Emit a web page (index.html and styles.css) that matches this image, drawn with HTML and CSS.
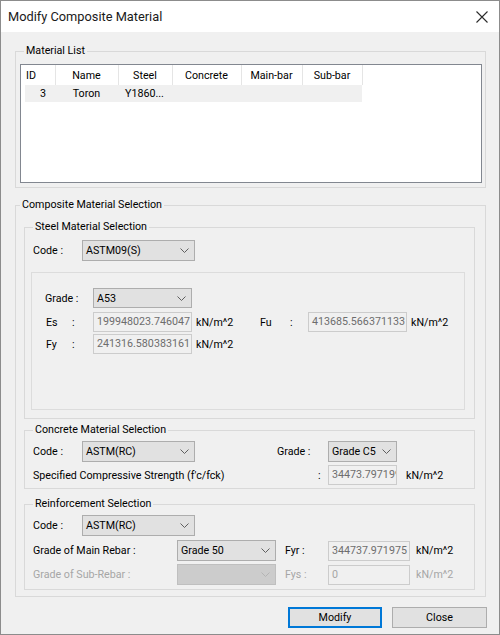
FILE: index.html
```html
<!DOCTYPE html>
<html lang="en">
<head>
    <meta charset="UTF-8">
    <meta name="viewport" content="width=device-width, initial-scale=1.0">
    <title>Modify Composite Material</title>
    <link rel="stylesheet" href="styles.css">
</head>
<body>
    <div class="dialog">
        <div class="titlebar">
            <span class="title">Modify Composite Material</span>
            <svg class="close" width="12" height="12" viewBox="0 0 12 12">
                <path d="M0.5 0.5L11.5 11.5M11.5 0.5L0.5 11.5" stroke="#2b2b2b" stroke-width="1.1" fill="none"/>
            </svg>
        </div>

        <div class="content">
            <fieldset class="group list-group">
                <legend>Material List</legend>
                <div class="listview">
                    <table>
                        <colgroup>
                            <col style="width:34px"><col style="width:63px"><col style="width:54px">
                            <col style="width:69px"><col style="width:61px"><col style="width:60px">
                        </colgroup>
                        <thead>
                            <tr>
                                <th class="c-id">ID</th>
                                <th>Name</th>
                                <th>Steel</th>
                                <th>Concrete</th>
                                <th>Main-bar</th>
                                <th>Sub-bar</th>
                            </tr>
                        </thead>
                        <tbody>
                            <tr>
                                <td class="c-id">3</td>
                                <td class="mid">Toron</td>
                                <td class="steel-cell">Y1860...</td>
                                <td></td>
                                <td></td>
                                <td></td>
                            </tr>
                        </tbody>
                    </table>
                </div>
            </fieldset>

            <fieldset class="group composite">
                <legend>Composite Material Selection</legend>

                <!-- steel -->
                <fieldset class="group sub steel">
                    <legend>Steel Material Selection</legend>
                    <div class="row code-row">
                        <span class="lbl code-lbl">Code :</span>
                        <div class="combo w113">ASTM09(S)
                            <svg width="9" height="5" viewBox="0 0 9 5"><path d="M0.5 0.5L4.5 4.5L8.5 0.5" fill="none" stroke="#5f5f5f"/></svg>
                        </div>
                    </div>
                    <div class="inner">
                        <div class="row">
                            <span class="lbl grade-lbl">Grade :</span>
                            <div class="combo w99 h20">A53
                                <svg width="9" height="5" viewBox="0 0 9 5"><path d="M0.5 0.5L4.5 4.5L8.5 0.5" fill="none" stroke="#5f5f5f"/></svg>
                            </div>
                        </div>
                        <div class="row prop-row first">
                            <span class="lbl pname">Es</span>
                            <span class="lbl pcolon">:</span>
                            <div class="field w99">199948023.746047</div>
                            <span class="unit unit-left">kN/m^2</span>
                            <span class="lbl fu-name">Fu</span>
                            <span class="lbl fu-colon">:</span>
                            <div class="field w99">413685.566371133</div>
                            <span class="unit">kN/m^2</span>
                        </div>
                        <div class="row prop-row">
                            <span class="lbl pname">Fy</span>
                            <span class="lbl pcolon">:</span>
                            <div class="field w99">241316.580383161</div>
                            <span class="unit unit-left">kN/m^2</span>
                        </div>
                    </div>
                </fieldset>

                <!-- concrete -->
                <fieldset class="group sub concrete">
                    <legend>Concrete Material Selection</legend>
                    <div class="row">
                        <span class="lbl code-lbl">Code :</span>
                        <div class="combo w113">ASTM(RC)
                            <svg width="9" height="5" viewBox="0 0 9 5"><path d="M0.5 0.5L4.5 4.5L8.5 0.5" fill="none" stroke="#5f5f5f"/></svg>
                        </div>
                        <span class="lbl cgrade-lbl">Grade :</span>
                        <div class="combo w69">Grade C5
                            <svg width="9" height="5" viewBox="0 0 9 5"><path d="M0.5 0.5L4.5 4.5L8.5 0.5" fill="none" stroke="#5f5f5f"/></svg>
                        </div>
                    </div>
                    <div class="row fck-row">
                        <span class="lbl fck-lbl">Specified Compressive Strength (f'c/fck)</span>
                        <span class="lbl fck-colon">:</span>
                        <div class="field w69">34473.797199</div>
                        <span class="unit fck-unit">kN/m^2</span>
                    </div>
                </fieldset>

                <!-- rebar -->
                <fieldset class="group sub rebar">
                    <legend>Reinforcement Selection</legend>
                    <div class="row">
                        <span class="lbl code-lbl">Code :</span>
                        <div class="combo w113">ASTM(RC)
                            <svg width="9" height="5" viewBox="0 0 9 5"><path d="M0.5 0.5L4.5 4.5L8.5 0.5" fill="none" stroke="#5f5f5f"/></svg>
                        </div>
                    </div>
                    <div class="row bar-row main">
                        <span class="lbl bar-lbl">Grade of Main Rebar :</span>
                        <div class="combo w99">Grade 50
                            <svg width="9" height="5" viewBox="0 0 9 5"><path d="M0.5 0.5L4.5 4.5L8.5 0.5" fill="none" stroke="#5f5f5f"/></svg>
                        </div>
                        <span class="lbl f-lbl">Fyr :</span>
                        <div class="field w82">344737.971975</div>
                        <span class="unit bar-unit">kN/m^2</span>
                    </div>
                    <div class="row bar-row disabled">
                        <span class="lbl bar-lbl">Grade of Sub-Rebar :</span>
                        <div class="combo w99 off">
                            <svg width="9" height="5" viewBox="0 0 9 5"><path d="M0.5 0.5L4.5 4.5L8.5 0.5" fill="none" stroke="#b4b4b4"/></svg>
                        </div>
                        <span class="lbl f-lbl">Fys :</span>
                        <div class="field w82 left">0</div>
                        <span class="unit bar-unit">kN/m^2</span>
                    </div>
                </fieldset>
            </fieldset>

            <div class="buttons">
                <button class="btn default">Modify</button>
                <button class="btn">Close</button>
            </div>
        </div>
    </div>
</body>
</html>
```

FILE: styles.css
```css
* {
box-sizing: border-box;
}

html, body {
margin: 0;
padding: 0;
}

body {
width: 500px;
height: 635px;
font-family: Roboto, "Liberation Sans", sans-serif;
font-size: 10.7px;
color: #000;
background: #f0f0f0;
}

.dialog {
width: 500px;
height: 635px;
border: 1px solid #8c8c8c;
background: #f0f0f0;
display: flex;
flex-direction: column;
}

.titlebar {
height: 31px;
flex: none;
background: #fff;
display: flex;
align-items: center;
justify-content: space-between;
padding: 0 11px 0 7px;
}

.title {
font-size: 12.8px;
color: #1a1a1a;
}

.content {
flex: 1;
padding: 11px 13px 0 14px;
}

/* group boxes */
fieldset.group {
margin: 0;
min-width: 0;
border: 1px solid #d9d9d9;
}

fieldset.group > legend {
padding: 0 2px;
height: 16px;
line-height: 16px;
}

.list-group {
padding: 5px 3px 4px 4px;
}

.list-group > legend {
margin-left: 4px;
}

.listview {
height: 119px;
background: #fff;
border: 1px solid #828790;
overflow: hidden;
}

.listview table {
border-collapse: collapse;
table-layout: fixed;
width: 341px;
}

.listview th {
font-weight: normal;
height: 20px;
padding: 0;
text-align: center;
border-right: 1px solid #e5e5e5;
}

.listview th.c-id {
text-align: left;
padding-left: 5px;
}

.listview td {
height: 17px;
padding: 0;
background: #f0f0f0;
white-space: nowrap;
}

.listview td.c-id {
text-align: right;
padding-right: 9px;
background: linear-gradient(to right, #fff 4px, #f0f0f0 4px);
}

.listview td.mid {
text-align: center;
}

.listview td.steel-cell {
padding-left: 7px;
}

.composite {
margin-top: 9px !important;
padding: 6px 10px 6px 8px;
}

.composite > legend {
margin-left: -4px;
}

.sub > legend {
margin-left: 0;
}

.steel {
padding: 5px 9px 8px 6px;
}

.steel > legend {
margin-left: 2px;
}

.concrete {
margin-top: 3px !important;
padding: 3px 9px 3px 8px;
}

.rebar {
margin-top: 7px !important;
padding: 3px 9px 4px 8px;
}

/* rows & controls */
.row {
display: flex;
align-items: center;
white-space: nowrap;
}

.code-row {
padding-left: 2px;
}

.code-lbl {
width: 49px;
}

.combo {
height: 21px;
display: flex;
align-items: center;
justify-content: space-between;
padding: 0 5px 0 3px;
background: #e1e1e1;
border: 1px solid #adadad;
}

.combo.h20 {
height: 20px;
}

.combo.off {
background: #cccccc;
border-color: #bfbfbf;
justify-content: flex-end;
}

.w113 { width: 113px; }
.w99 { width: 99px; }
.w82 { width: 82px; }
.w69 { width: 69px; }

.field {
height: 20px;
line-height: 18px;
padding: 0 2px 0 3px;
background: #f0f0f0;
border: 1px solid #cccccc;
color: #6d6d6d;
overflow: hidden;
white-space: nowrap;
}

.unit {
color: #000;
}

.inner {
margin-top: 11px;
height: 138px;
border: 1px solid #dcdcdc;
padding: 15px 0 0 13px;
}

.grade-lbl {
width: 48px;
}

.prop-row {
margin-top: 2px;
}

.prop-row.first {
margin-top: 4px;
}

.pname {
width: 27px;
padding-left: 1px;
}

.pcolon {
width: 21px;
}

.unit-left {
margin-left: 4px;
width: 64px;
}

.fu-name {
width: 30px;
}

.fu-colon {
width: 18px;
}

.prop-row .unit:last-child {
margin-left: 4px;
}

.cgrade-lbl {
margin-left: 82px;
width: 51px;
}

.fck-row {
margin-top: 3px;
}

.fck-lbl {
width: 285px;
}

.fck-colon {
width: 10px;
}

.fck-unit {
margin-left: 9px;
}

.bar-row {
margin-top: 4px;
}

.bar-row.disabled {
margin-top: 3px;
}

.bar-lbl {
width: 144px;
}

.f-lbl {
margin-left: 9px;
width: 43px;
}

.bar-unit {
margin-left: 6px;
}

.disabled .lbl,
.disabled .unit,
.disabled .field {
color: #a6a6a6;
}

/* buttons */
.buttons {
margin-top: 10px;
margin-right: -1px;
display: flex;
justify-content: flex-end;
gap: 10px;
}

.btn {
width: 95px;
height: 21px;
padding: 0;
font: inherit;
color: #000;
background: #e1e1e1;
border: 1px solid #adadad;
}

.btn.default {
width: 94px;
border-color: #0078d7;
box-shadow: inset 0 0 0 1px #0078d7;
}
```
